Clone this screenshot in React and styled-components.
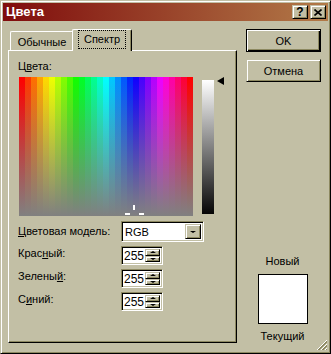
import React from 'react';
import styled, { createGlobalStyle, css } from 'styled-components';

const C = {
  face: '#c2bfa5',
  shadow: '#8d8961',
  light: '#ffffff',
  dark: '#000000',
};

const Global = createGlobalStyle`
  html, body { margin: 0; padding: 0; background: ${C.face}; }
  body {
    font-family: "Liberation Sans", Arial, sans-serif;
    font-size: 11px;
    color: #000;
  }
  * { box-sizing: border-box; }
`;

const raised = css`
  background: ${C.face};
  border: 1px solid;
  border-color: ${C.face} ${C.dark} ${C.dark} ${C.face};
  box-shadow: inset 1px 1px 0 ${C.light}, inset -1px -1px 0 ${C.shadow};
`;

const sunken = css`
  border: 1px solid;
  border-color: ${C.shadow} ${C.light} ${C.light} ${C.shadow};
  box-shadow: inset 1px 1px 0 ${C.dark}, inset -1px -1px 0 ${C.face};
`;

const Window = styled.div`
  ${raised};
  position: relative;
  width: 331px;
  height: 354px;
  padding: 2px;
  display: flex;
  flex-direction: column;
`;

const TitleBar = styled.div`
  height: 18px;
  display: flex;
  align-items: center;
  padding: 0 2px 0 2px;
  background: linear-gradient(to right, #800c0c, #b27a48);
`;

const TitleText = styled.div`
  flex: 1;
  color: #fff;
  font-weight: bold;
  font-size: 13px;
  padding-left: 1px;
  line-height: 18px;
`;

const CaptionButton = styled.div`
  ${raised};
  width: 16px;
  height: 14px;
  margin-left: ${(p) => p.$gap}px;
  display: flex;
  align-items: center;
  justify-content: center;
  font-weight: bold;
  font-size: 12px;
  line-height: 12px;
`;

const Body = styled.div`
  flex: 1;
  display: flex;
  padding: 8px 0 8px 5px;
`;

const LeftCol = styled.div`
  width: 229px;
  display: flex;
  flex-direction: column;
`;

const TabStrip = styled.div`
  height: 21px;
  display: flex;
  align-items: flex-end;
  padding-left: 2px;
  position: relative;
  z-index: 1;
`;

const Tab = styled.div`
  width: ${(p) => p.$w}px;
  height: ${(p) => (p.$active ? 22 : 19)}px;
  margin-left: ${(p) => (p.$active ? -2 : 0)}px;
  margin-bottom: ${(p) => (p.$active ? -1 : 0)}px;
  background: ${C.face};
  border-top: 1px solid ${C.light};
  border-left: 1px solid ${C.light};
  border-right: 1px solid ${C.dark};
  border-radius: 2px 2px 0 0;
  box-shadow: inset -1px 0 0 ${C.shadow};
  display: flex;
  align-items: center;
  justify-content: center;
  padding-top: ${(p) => (p.$active ? 0 : 1)}px;
  padding-bottom: ${(p) => (p.$active ? 3 : 0)}px;
`;

const FocusText = styled.span`
  outline: 1px dotted #000;
  padding: 2px 5px;
  line-height: 13px;
`;

const Panel = styled.div`
  flex: 1;
  border: 1px solid;
  border-color: ${C.light} ${C.dark} ${C.dark} ${C.light};
  box-shadow: inset -1px -1px 0 ${C.shadow};
  padding: 9px 0 0 9px;
`;

const Label = styled.div`
  line-height: 13px;
  white-space: nowrap;
  align-self: ${(p) => p.$align || 'center'};
  padding-top: ${(p) => p.$pt || 0}px;
`;

const U = styled.span`
  text-decoration: underline;
`;

const bands = 29;
const bandW = 6;
const hueStops = Array.from({ length: bands }, (_, i) => {
  const h = Math.round((i / (bands - 1)) * 360) % 361;
  return `hsl(${h}, 100%, 50%) ${i * bandW}px ${(i + 1) * bandW}px`;
}).join(', ');

const SpectrumRow = styled.div`
  display: flex;
  align-items: flex-start;
  margin-top: 4px;
  margin-left: 1px;
`;

const Spectrum = styled.div`
  position: relative;
  width: 174px;
  height: 139px;
  background:
    linear-gradient(to bottom, rgba(128, 128, 128, 0), rgb(128, 128, 128)),
    linear-gradient(to right, ${hueStops});
`;

const Crosshair = styled.svg`
  position: absolute;
  left: 106px;
  top: 128px;
`;

const LumBar = styled.div`
  width: 12px;
  height: 134px;
  margin-left: 9px;
  margin-top: 3px;
  background: linear-gradient(to bottom, #ffffff, #050505);
`;

const LumArrow = styled.div`
  width: 0;
  height: 0;
  margin-left: 3px;
  border-top: 4px solid transparent;
  border-bottom: 4px solid transparent;
  border-right: 7px solid #000;
`;

const FormGrid = styled.div`
  display: grid;
  grid-template-columns: 103px auto;
  grid-template-rows: 21px 19px 19px 19px;
  row-gap: 4px;
  margin-top: 5px;
`;

const Select = styled.div`
  ${sunken};
  width: 83px;
  height: 21px;
  background: #fff;
  display: flex;
  align-items: stretch;
  padding: 2px;
`;

const SelectValue = styled.div`
  flex: 1;
  line-height: 17px;
  padding-left: 1px;
`;

const DropButton = styled.div`
  ${raised};
  width: 16px;
  display: flex;
  align-items: center;
  justify-content: center;
`;

const DownTri = styled.div`
  width: 0;
  height: 0;
  border-left: ${(p) => p.$s}px solid transparent;
  border-right: ${(p) => p.$s}px solid transparent;
  border-top: ${(p) => p.$s - 1}px solid #000;
`;

const UpTri = styled.div`
  width: 0;
  height: 0;
  border-left: ${(p) => p.$s}px solid transparent;
  border-right: ${(p) => p.$s}px solid transparent;
  border-bottom: ${(p) => p.$s - 1}px solid #000;
`;

const SpinBox = styled.div`
  ${sunken};
  width: 42px;
  height: 19px;
  background: #fff;
  display: flex;
  padding: 2px;
  align-items: stretch;
`;

const SpinValue = styled.div`
  flex: 1;
  font-size: 12px;
  line-height: 15px;
`;

const SpinButtons = styled.div`
  width: 15px;
  display: flex;
  flex-direction: column;
`;

const SpinHalf = styled.div`
  ${raised};
  flex: 1;
  display: flex;
  align-items: center;
  justify-content: center;
`;

const RightCol = styled.div`
  width: 75px;
  margin-left: 9px;
  display: flex;
  flex-direction: column;
`;

const Button = styled.div`
  ${raised};
  height: 23px;
  margin-bottom: 7px;
  display: flex;
  align-items: center;
  justify-content: center;
  ${(p) =>
    p.$default &&
    css`
      border: 1px solid #000;
      box-shadow: inset 1px 1px 0 ${C.light}, inset -1px -1px 0 ${C.dark},
        inset -2px -2px 0 ${C.shadow};
    `}
`;

const Preview = styled.div`
  margin-top: auto;
  display: flex;
  flex-direction: column;
  align-items: center;
  padding-right: 2px;
`;

const Swatch = styled.div`
  width: 50px;
  height: 50px;
  border: 1px solid #000;
  background: ${(p) => p.$color};
  margin: 6px 0;
`;

const Grip = styled.svg`
  position: absolute;
  right: 2px;
  bottom: 2px;
`;

function Spin({ value }) {
  return (
    <SpinBox>
      <SpinValue>{value}</SpinValue>
      <SpinButtons>
        <SpinHalf>
          <UpTri $s={3} />
        </SpinHalf>
        <SpinHalf>
          <DownTri $s={3} />
        </SpinHalf>
      </SpinButtons>
    </SpinBox>
  );
}

export default function App() {
  return (
    <>
      <Global />
      <Window>
        <TitleBar>
          <TitleText>Цвета</TitleText>
          <CaptionButton $gap={0}>?</CaptionButton>
          <CaptionButton $gap={2}>
            <svg width="8" height="7" viewBox="0 0 8 7">
              <path d="M0.5 0.5 L7.5 6.5 M7.5 0.5 L0.5 6.5" stroke="#000" strokeWidth="1.6" />
            </svg>
          </CaptionButton>
        </TitleBar>
        <Body>
          <LeftCol>
            <TabStrip>
              <Tab $w={64}>Обычные</Tab>
              <Tab $w={60} $active>
                <FocusText>Спектр</FocusText>
              </Tab>
            </TabStrip>
            <Panel>
              <Label>
                Ц<U>в</U>ета:
              </Label>
              <SpectrumRow>
                <Spectrum>
                  <Crosshair width="20" height="11" viewBox="0 0 20 11">
                    <rect x="8" y="0" width="2" height="5" fill="#fff" />
                    <rect x="0" y="8" width="5" height="2" fill="#fff" />
                    <rect x="14" y="8" width="5" height="2" fill="#fff" />
                  </Crosshair>
                </Spectrum>
                <LumBar />
                <LumArrow />
              </SpectrumRow>
              <FormGrid>
                <Label>
                  <U>Ц</U>ветовая модель:
                </Label>
                <Select>
                  <SelectValue>RGB</SelectValue>
                  <DropButton>
                    <DownTri $s={3} />
                  </DropButton>
                </Select>
                <Label $align="start" $pt={1}>
                  Крас<U>н</U>ый:
                </Label>
                <Spin value="255" />
                <Label $align="start" $pt={1}>
                  Зелены<U>й</U>:
                </Label>
                <Spin value="255" />
                <Label $align="start" $pt={1}>
                  С<U>и</U>ний:
                </Label>
                <Spin value="255" />
              </FormGrid>
            </Panel>
          </LeftCol>
          <RightCol>
            <Button $default>OK</Button>
            <Button>Отмена</Button>
            <Preview>
              <Label>Новый</Label>
              <Swatch $color="#ffffff" />
              <Label>Текущий</Label>
            </Preview>
          </RightCol>
        </Body>
        <Grip width="12" height="12" viewBox="0 0 12 12">
          <path d="M11 1 L1 11 M11 5 L5 11 M11 9 L9 11" stroke={C.light} strokeWidth="1" />
          <path d="M11 2 L2 11 M11 3 L3 11 M11 6 L6 11 M11 7 L7 11 M11 10 L10 11" stroke={C.shadow} strokeWidth="1" />
        </Grip>
      </Window>
    </>
  );
}
